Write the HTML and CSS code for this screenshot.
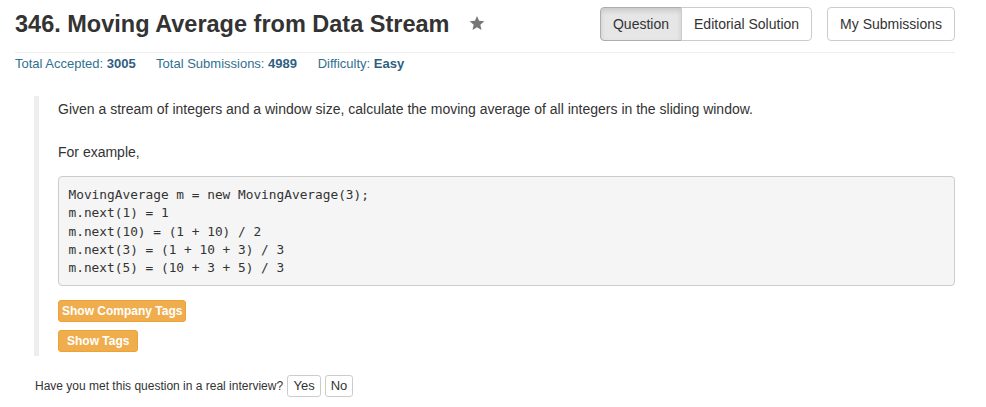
FILE: index.html
```html
<!DOCTYPE html>
<html>
<head>
<meta charset="utf-8">
<link rel="stylesheet" href="styles.css">
</head>
<body>
<div class="container">
  <div class="header">
    <h3 class="title">346. Moving Average from Data Stream
      <svg class="star" width="16" height="16" viewBox="0 0 24 24"><path d="M12 1.5l3.1 7.3 7.9.7-6 5.2 1.8 7.8L12 18.4l-6.8 4.1L7 14.7 1 9.5l7.9-.7z" fill="#777"/></svg>
    </h3>
    <div class="nav">
      <div class="btn-group">
        <span class="btn btn-default active">Question</span><span class="btn btn-default">Editorial Solution</span>
      </div>
      <span class="btn btn-default">My Submissions</span>
    </div>
  </div>
  <div class="stats">
    <span class="stat">Total Accepted: <b>3005</b></span>
    <span class="stat">Total Submissions: <b>4989</b></span>
    <span class="stat">Difficulty: <b>Easy</b></span>
  </div>
  <div class="question">
    <p class="desc">Given a stream of integers and a window size, calculate the moving average of all integers in the sliding window.</p>
    <p class="desc example">For example,</p>
    <pre class="code">MovingAverage m = new MovingAverage(3);
m.next(1) = 1
m.next(10) = (1 + 10) / 2
m.next(3) = (1 + 10 + 3) / 3
m.next(5) = (10 + 3 + 5) / 3</pre>
    <div class="tags">
      <span class="btn-xs btn-warning">Show Company Tags</span>
    </div>
    <div class="tags">
      <span class="btn-xs btn-warning wide">Show Tags</span>
    </div>
  </div>
  <div class="interview">
    Have you met this question in a real interview?
    <span class="btn-xs btn-plain">Yes</span><span class="btn-xs btn-plain no">No</span>
  </div>
</div>
</body>
</html>
```
FILE: styles.css
```css
* { box-sizing: border-box; }
html, body { margin: 0; padding: 0; background: #fff; }
body {
  font-family: "Liberation Sans", Arial, Helvetica, sans-serif;
  font-size: 14px;
  line-height: 1.42857;
  color: #333;
}
.container {
  width: 940px;
  margin-left: 15px;
}
.header {
  display: flex;
  justify-content: space-between;
  align-items: flex-start;
  padding-top: 7px;
  padding-bottom: 11px;
  border-bottom: 1px solid #eee;
}
.title {
  margin: 0;
  font-size: 23.5px;
  font-weight: bold;
  line-height: 34px;
  color: #333;
  display: flex;
  align-items: center;
}
.star { margin-left: 20px; margin-top: -3px; }
.nav { display: flex; gap: 15px; }
.btn-group { display: flex; }
.btn {
  display: inline-block;
  padding: 6px 12px;
  font-size: 14px;
  line-height: 20px;
  border: 1px solid #ccc;
  border-radius: 4px;
  background: #fff;
  color: #333;
}
.btn-group .btn:first-child { border-top-right-radius: 0; border-bottom-right-radius: 0; }
.btn-group .btn:last-child { border-top-left-radius: 0; border-bottom-left-radius: 0; margin-left: -1px; }
.btn.active {
  background: #e6e6e6;
  border-color: #adadad;
  box-shadow: inset 0 3px 5px rgba(0,0,0,0.125);
}
.stats {
  font-size: 13px;
  line-height: 17px;
  padding-top: 2px;
  color: #31708f;
}
.stat { margin-right: 17px; }
.stat b { color: #2f5f7f; }
.question {
  margin: 24px 0 0 19px;
  border-left: 5px solid #eee;
  padding: 3px 0 4px 19px;
}
.desc { margin: 0 0 0; line-height: 20px; }
.example { margin-top: 23px; }
.code {
  margin: 14px 0 14px;
  padding: 9px 9.5px 8px;
  font-family: "DejaVu Sans Mono", Menlo, monospace;
  font-size: 12.8px;
  line-height: 18.3px;
  color: #333;
  background: #f5f5f5;
  border: 1px solid #ccc;
  border-radius: 4px;
}
.tags { margin-bottom: 8px; }
.tags:last-child { margin-bottom: 0; }
.btn-xs {
  display: inline-block;
  font-size: 12px;
  line-height: 18px;
  padding: 1px 5px;
  border-radius: 3px;
  border: 1px solid transparent;
}
.btn-warning {
  background: #f0ad4e;
  border-color: #eea236;
  color: #fff;
  font-weight: bold;
  padding: 1px 3px;
}
.btn-warning.wide { padding: 1px 8px; }
.interview {
  margin-top: 19px;
  padding-left: 20px;
  font-size: 12px;
  line-height: 22px;
  color: #333;
}
.btn-plain {
  background: #fff;
  border-color: #ccc;
  color: #333;
  margin-left: 1px;
  font-size: 13px;
  padding: 1px 5px;
}
.btn-plain.no { margin-left: 4px; }
```
